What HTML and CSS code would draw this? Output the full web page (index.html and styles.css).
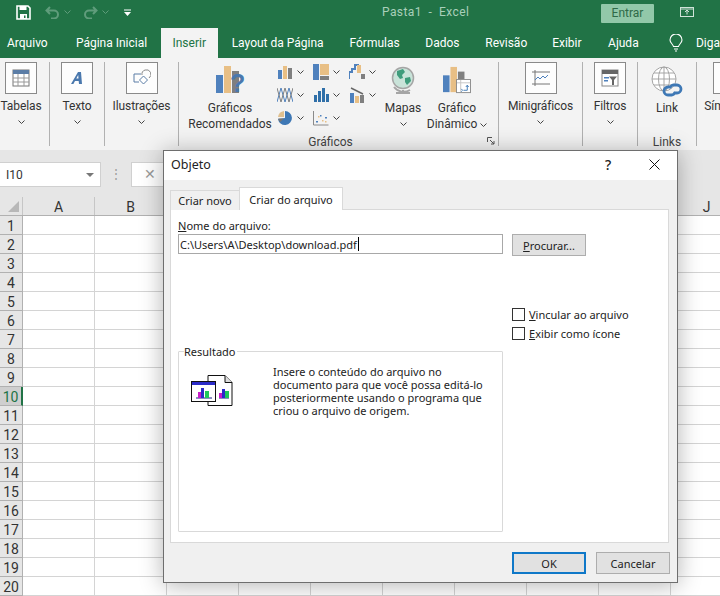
FILE: index.html
```html
<!DOCTYPE html>
<html lang="pt">
<head>
    <meta charset="utf-8">
    <title>Pasta1 - Excel</title>
    <link rel="stylesheet" href="styles.css">
</head>
<body>
    <header class="titlebar">
        <svg class="qa-save" viewBox="0 0 15 15"><path d="M1 1h11l2 2v11H1z" fill="none" stroke="#fff" stroke-width="1.6"/><rect x="3.5" y="1" width="7" height="4" fill="#fff"/><rect x="4" y="9" width="7" height="5" fill="#fff"/><rect x="8" y="10.5" width="1.5" height="2.5" fill="#217346"/></svg>
        <svg class="qa-arrow" viewBox="0 0 15 13"><path d="M5 1L1.5 4.5 5 8M2 4.5h7a4 4 0 0 1 0 8H6" fill="none" stroke="#5f9c7b" stroke-width="2"/></svg>
        <svg class="chev chev-dim" viewBox="0 0 7 4"><path d="M.5.5l3 3 3-3"/></svg>
        <svg class="qa-arrow qa-redo" viewBox="0 0 15 13"><path d="M10 1l3.5 3.5L10 8M13 4.5H6a4 4 0 0 0 0 8h3" fill="none" stroke="#5f9c7b" stroke-width="2"/></svg>
        <svg class="chev chev-dim" viewBox="0 0 7 4"><path d="M.5.5l3 3 3-3"/></svg>
        <svg class="qa-more" viewBox="0 0 7 7"><path d="M0 .5h7v1H0zM0 3h7L3.5 7z" fill="#fff"/></svg>
        <span class="doc-title">Pasta1&nbsp; -&nbsp; Excel</span>
        <span class="signin">Entrar</span>
        <svg class="ribbon-opt" viewBox="0 0 14 10"><rect x=".5" y=".5" width="13" height="9" fill="none" stroke="#cfe3d8"/><path d="M7 7.5V3M5 5l2-2 2 2M.5 2h13" fill="none" stroke="#cfe3d8"/></svg>
    </header>

    <nav class="tabs">
        <span class="tab tab-file">Arquivo</span>
        <span class="tab tab-home">Página Inicial</span>
        <span class="tab tab-active">Inserir</span>
        <span class="tab tab-layout">Layout da Página</span>
        <span class="tab tab-form">Fórmulas</span>
        <span class="tab tab-data">Dados</span>
        <span class="tab tab-rev">Revisão</span>
        <span class="tab tab-view">Exibir</span>
        <span class="tab tab-help">Ajuda</span>
        <svg class="bulb" viewBox="0 0 14 18"><path d="M4.5 12.5C4 10 1 9 1 6a6 6 0 0 1 12 0c0 3-3 4-3.500 6.500zM5 15h4M6 17h2" fill="none" stroke="#fff" stroke-width="1.100"/></svg>
        <span class="tab tab-tell">Diga</span>
    </nav>

    <section class="ribbon">
        <div class="group group-tables">
            <div class="big-btn">
                <div class="icon-box">
                    <svg class="box-svg" viewBox="0 0 18 18"><rect x="1" y="1" width="16" height="16" fill="#fff" stroke="#777"/><rect x="1" y="1" width="16" height="4" fill="#5b7da6"/><path d="M1 9h16M1 13h16M6 5v12M12 5v12" stroke="#999"/></svg>
                </div>
                <span class="btn-label">Tabelas</span>
                <svg class="chev" viewBox="0 0 7 4"><path d="M.5.5l3 3 3-3"/></svg>
            </div>
        </div>
        <div class="group group-text">
            <div class="big-btn">
                <div class="icon-box">
                    <svg class="box-svg" viewBox="0 0 18 18"><path d="M3 15L10 3h3l1 12h-3l-.3-3H7l-1.600 3zM8.300 9.500h2.200L10.200 6z" fill="#4a78ad" fill-rule="evenodd"/></svg>
                </div>
                <span class="btn-label">Texto</span>
                <svg class="chev" viewBox="0 0 7 4"><path d="M.5.5l3 3 3-3"/></svg>
            </div>
        </div>
        <div class="group group-illus">
            <div class="big-btn">
                <div class="icon-box">
                    <svg class="box-svg" viewBox="0 0 18 18"><path d="M8 5H1v8h5" fill="none" stroke="#5b7da6"/><path d="M9 6a4.500 4.500 0 1 1 7 3" fill="none" stroke="#888"/><path d="M10.500 7l4 4-4 4-4-4z" fill="#fff" stroke="#5b7da6"/></svg>
                </div>
                <span class="btn-label">Ilustrações</span>
                <svg class="chev" viewBox="0 0 7 4"><path d="M.5.5l3 3 3-3"/></svg>
            </div>
        </div>

        <div class="group group-charts">
            <div class="group-body">
                <div class="tall-btn tall-rec">
                    <svg class="tall-icon tall-help" viewBox="0 0 28 28"><rect x="0" y="9" width="7" height="18" fill="#4f81bd"/><rect x="8" y="0" width="7" height="27" fill="#e8bf85"/><rect x="16" y="5" width="7" height="22" fill="#7f7f7f"/><text x="14" y="26" class="help-mark">?</text></svg>
                    <span class="btn-label">Gráficos<br>Recomendados</span>
                </div>
                <div class="chart-grid">
                    <div class="mini">
                        <svg class="mini-icon" viewBox="0 0 16 16"><rect x="1" y="6" width="4" height="9" fill="#4f81bd"/><rect x="6" y="2" width="4" height="13" fill="#e8bf85"/><rect x="11" y="4" width="4" height="11" fill="#7f7f7f"/></svg>
                        <svg class="chev" viewBox="0 0 7 4"><path d="M.5.5l3 3 3-3"/></svg>
                    </div>
                    <div class="mini">
                        <svg class="mini-icon" viewBox="0 0 16 16"><rect x="0" y="0" width="6" height="16" fill="#4f81bd"/><rect x="7" y="0" width="9" height="11" fill="#e8bf85"/><rect x="7" y="12" width="9" height="4" fill="#7f7f7f"/></svg>
                        <svg class="chev" viewBox="0 0 7 4"><path d="M.5.5l3 3 3-3"/></svg>
                    </div>
                    <div class="mini">
                        <svg class="mini-icon" viewBox="0 0 16 16"><path d="M0 15V8h3V5h3V1h3v4" fill="none" stroke="#4f81bd" stroke-width="2"/><rect x="8" y="1" width="4" height="8" fill="#e8bf85"/><rect x="12" y="10" width="4" height="5" fill="#7f7f7f"/></svg>
                        <svg class="chev" viewBox="0 0 7 4"><path d="M.5.5l3 3 3-3"/></svg>
                    </div>
                    <div class="mini">
                        <svg class="mini-icon" viewBox="0 0 16 16"><path d="M0 15L4 1l4 14 4-14 4 14" fill="none" stroke="#4f81bd"/><path d="M0 1l4 14 4-14 4 14 4-14" fill="none" stroke="#7f7f7f"/></svg>
                        <svg class="chev" viewBox="0 0 7 4"><path d="M.5.5l3 3 3-3"/></svg>
                    </div>
                    <div class="mini">
                        <svg class="mini-icon" viewBox="0 0 16 16"><path d="M1 8h3v7H1zM5 4h3v11H5zM9 1h3v14H9zM13 7h3v8h-3z" fill="#2f6fa8"/></svg>
                        <svg class="chev" viewBox="0 0 7 4"><path d="M.5.5l3 3 3-3"/></svg>
                    </div>
                    <div class="mini">
                        <svg class="mini-icon" viewBox="0 0 16 16"><rect x="1" y="6" width="4" height="10" fill="#4f81bd"/><rect x="6" y="9" width="4" height="7" fill="#e8bf85"/><rect x="11" y="8" width="4" height="8" fill="#7f7f7f"/><path d="M2 1l12 6" stroke="#666" stroke-width="1.500"/></svg>
                        <svg class="chev" viewBox="0 0 7 4"><path d="M.5.5l3 3 3-3"/></svg>
                    </div>
                    <div class="mini">
                        <svg class="mini-icon" viewBox="0 0 16 16"><path d="M8 8V1a7 7 0 1 1-7 8z" fill="#3e78b5"/><path d="M7 7V1a7 7 0 0 0-6 6z" fill="#e0c08f"/><path d="M7 8.500H1.200a6 6 0 0 0 2 3.500z" fill="#777"/></svg>
                        <svg class="chev" viewBox="0 0 7 4"><path d="M.5.5l3 3 3-3"/></svg>
                    </div>
                    <div class="mini">
                        <svg class="mini-icon" viewBox="0 0 16 16"><path d="M.5 1v14h15" fill="none" stroke="#8a8a8a"/><path d="M3 11h2v1.500H3zM7 5h1.500v1.500H7zM12 7h2v1.500h-2z" fill="#4f81bd"/><path d="M5 6h1.500v1.500H5zM9 10h1.500v1.500H9zM12 11h1.500v1.500H12z" fill="#e8bf85"/></svg>
                        <svg class="chev" viewBox="0 0 7 4"><path d="M.5.5l3 3 3-3"/></svg>
                    </div>
                </div>
                <div class="tall-btn tall-maps">
                    <svg class="tall-icon" viewBox="0 0 26 28"><circle cx="13" cy="12" r="10.500" fill="#c9e3d9" stroke="#a5a5a5" stroke-width="1.500"/><path d="M7 5l6-2 2 3-3 3 1 3-3 1-3-4zM15 12l5-1 1 4-4 4-2-3z" fill="#3f9c7c"/><path d="M4 21a12 12 0 0 0 16 3M13 24v2" fill="none" stroke="#a5a5a5" stroke-width="2"/><rect x="6" y="26" width="14" height="2" fill="#a5a5a5"/></svg>
                    <span class="btn-label">Mapas</span>
                    <svg class="chev chev-tall" viewBox="0 0 7 4"><path d="M.5.5l3 3 3-3"/></svg>
                </div>
                <div class="tall-btn tall-pivot">
                    <svg class="tall-icon" viewBox="0 0 30 28"><rect x="0" y="9" width="7" height="18" fill="#4f81bd"/><rect x="8" y="0" width="7" height="27" fill="#e8bf85"/><rect x="16" y="5" width="7" height="8" fill="#7f7f7f"/><rect x="14.500" y="13.500" width="15" height="14" fill="#fff" stroke="#8a8a8a"/><path d="M15 17h14M19 14v13" stroke="#c4c4c4"/><path d="M22 25h4v-5M24.500 21.500l1.500-2 1.500 2M21 25l-1.500-1.500M21 25l-1.500 1.500" fill="none" stroke="#3e78b5"/></svg>
                    <span class="btn-label">Gráfico<br>Dinâmico <svg class="chev chev-inline" viewBox="0 0 7 4"><path d="M.5.5l3 3 3-3"/></svg></span>
                </div>
            </div>
            <div class="group-name">Gráficos</div>
            <svg class="launcher" viewBox="0 0 8 8"><path d="M.5 5V.5H5M3 3l4 4M7 4v3H4" fill="none" stroke="#555"/></svg>
        </div>

        <div class="group group-spark">
            <div class="big-btn">
                <div class="icon-box">
                    <svg class="box-svg" viewBox="0 0 18 18"><path d="M0 3h18M0 15h18M3 1v16" stroke="#777" fill="none"/><path d="M3 11l3-3 2 2 3-3 2 2 3-3" fill="none" stroke="#4f81bd"/></svg>
                </div>
                <span class="btn-label">Minigráficos</span>
                <svg class="chev" viewBox="0 0 7 4"><path d="M.5.5l3 3 3-3"/></svg>
            </div>
        </div>
        <div class="group group-filter">
            <div class="big-btn">
                <div class="icon-box">
                    <svg class="box-svg" viewBox="0 0 18 18"><rect x="1" y="1" width="16" height="16" fill="#fff" stroke="#888"/><rect x="1" y="1" width="16" height="4" fill="#666"/><path d="M3 8h5v1.500H3zM3 11h4v1.500H3z" fill="#4f81bd"/><path d="M8 7.500h8l-3 3.500v5h-2v-5z" fill="#666"/></svg>
                </div>
                <span class="btn-label">Filtros</span>
                <svg class="chev" viewBox="0 0 7 4"><path d="M.5.5l3 3 3-3"/></svg>
            </div>
        </div>
        <div class="group group-links">
            <div class="group-body">
                <div class="tall-btn tall-link">
                    <svg class="tall-icon link-icon" viewBox="0 0 32 31"><circle cx="13" cy="13" r="12" fill="#fff" stroke="#a5a5a5"/><ellipse cx="13" cy="13" rx="5.500" ry="12" fill="none" stroke="#a5a5a5"/><path d="M13 1v24M1 13h24M3 7h20M3 19h20" stroke="#a5a5a5"/><path d="M20 21h-3a4 4 0 0 0 0 8h4a4 4 0 0 0 3-3M23 27h3a4 4 0 0 0 0-8h-4a4 4 0 0 0-3 3" fill="none" stroke="#3e78b5" stroke-width="2.800"/></svg>
                    <span class="btn-label">Link</span>
                </div>
            </div>
            <div class="group-name">Links</div>
        </div>
        <div class="group group-symbols">
            <div class="big-btn">
                <div class="icon-box"></div>
                <span class="btn-label">Símbolos</span>
            </div>
        </div>
    </section>

    <section class="formula-bar">
        <div class="name-box">I10<span class="name-arrow"></span></div>
        <span class="bar-dots">⋮</span>
        <div class="formula-cancel">✕</div>
    </section>

    <section class="sheet">
        <div class="col-heads">
            <div class="corner"><span class="corner-mark"></span></div>
            <span class="col-head">A</span><span class="col-head">B</span><span class="col-head"></span><span class="col-head"></span><span class="col-head"></span><span class="col-head"></span><span class="col-head"></span><span class="col-head"></span><span class="col-head"></span><span class="col-head">J</span>
        </div>
        <div class="sheet-body">
            <div class="row-heads">
                <span class="row-head">1</span><span class="row-head">2</span><span class="row-head">3</span><span class="row-head">4</span><span class="row-head">5</span>
                <span class="row-head">6</span><span class="row-head">7</span><span class="row-head">8</span><span class="row-head">9</span><span class="row-head row-sel">10</span>
                <span class="row-head">11</span><span class="row-head">12</span><span class="row-head">13</span><span class="row-head">14</span><span class="row-head">15</span>
                <span class="row-head">16</span><span class="row-head">17</span><span class="row-head">18</span><span class="row-head">19</span><span class="row-head">20</span>
            </div>
            <div class="cells"></div>
        </div>
    </section>

    <div class="dialog">
        <div class="dlg-title">
            <span class="dlg-name">Objeto</span>
            <span class="dlg-help">?</span>
            <svg class="dlg-close" viewBox="0 0 11 11"><path d="M.5.5l10 10M10.500.5l-10 10" stroke="#111" fill="none"/></svg>
        </div>
        <div class="dlg-body">
            <div class="dlg-tabs">
                <span class="dlg-tab">Criar novo</span>
                <span class="dlg-tab dlg-tab-on">Criar do arquivo</span>
            </div>
            <div class="dlg-panel">
                <div class="panel-left">
                    <label class="file-label"><u>N</u>ome do arquivo:</label>
                    <div class="file-input">C:\Users\A\Desktop\download.pdf<span class="caret"></span></div>
                    <fieldset class="result">
                        <legend>Resultado</legend>
                        <svg class="result-icon" viewBox="0 0 42 32">
                            <path d="M17 .5h17l7 7v23H17z" fill="#fff" stroke="#111"/><path d="M34 .5v7h7" fill="#ddd" stroke="#111"/>
                            <rect x=".5" y="6.500" width="24" height="20" fill="#fff" stroke="#111"/><rect x="1" y="7" width="23" height="3" fill="#2b2bc8"/>
                            <path d="M5 23h16M28 23h10" stroke="#1a1a8a"/>
                            <path d="M7 17h3v6H7zM28 18h3v5h-3z" fill="#c81ec8"/><path d="M10 13h3v10h-3zM31 14h3v9h-3z" fill="#2b2bc8"/><path d="M14 16h4v7h-4zM34 16h4v7h-4z" fill="#1ec85a"/>
                        </svg>
                        <p class="result-text">Insere o conteúdo do arquivo no documento para que você possa editá-lo posteriormente usando o programa que criou o arquivo de origem.</p>
                    </fieldset>
                </div>
                <div class="panel-right">
                    <button class="dlg-btn" type="button"><u>P</u>rocurar...</button>
                    <div class="check-list">
                        <label class="check"><span class="check-box"></span><span><u>V</u>incular ao arquivo</span></label>
                        <label class="check"><span class="check-box"></span><span><u>E</u>xibir como ícone</span></label>
                    </div>
                </div>
            </div>
            <div class="dlg-foot">
                <button class="dlg-btn btn-default" type="button">OK</button>
                <button class="dlg-btn" type="button">Cancelar</button>
            </div>
        </div>
    </div>
</body>
</html>
```

FILE: styles.css
```css
* {
    margin: 0;
    padding: 0;
    box-sizing: border-box;
    font-family: Roboto, Arial, sans-serif;
}
body {
    width: 720px;
    height: 596px;
    overflow: hidden;
    background: #fff;
    color: #333;
    font-size: 12px;
}
svg {
    display: block;
    flex: none;
}

/* title bar */
.titlebar {
    display: flex;
    align-items: center;
    height: 28px;
    background: #217346;
    padding-left: 16px;
    padding-bottom: 4px;
}
.qa-save {
    width: 15px;
    height: 15px;
}
.qa-arrow {
    width: 15px;
    height: 13px;
    margin-left: 14px;
}
.qa-redo {
    margin-left: 12px;
}
.chev {
    width: 7px;
    height: 4px;
    fill: none;
    stroke: #444;
    stroke-width: 1;
}
.chev-dim {
    stroke: #5f9c7b;
    margin-left: 4px;
}
.qa-more {
    width: 7px;
    height: 7px;
    margin-left: 15px;
}
.doc-title {
    margin-left: 251px;
    width: 219px;
    color: #a9cfba;
    font-size: 12px;
    letter-spacing: .4px;
}
.signin {
    width: 53px;
    height: 19px;
    margin-top: 2px;
    background: #92c8a9;
    color: #2f6a48;
    text-align: center;
    line-height: 19px;
    border-radius: 1px;
}
.ribbon-opt {
    width: 14px;
    height: 10px;
    margin-left: 26px;
}

/* tabs */
.tabs {
    display: flex;
    align-items: center;
    height: 30px;
    background: #217346;
}
.tab {
    color: #fff;
    line-height: 30px;
    white-space: nowrap;
}
.tab-file { margin-left: 7px; width: 69px; }
.tab-home { width: 85px; }
.tab-active {
    width: 57px;
    background: #f3f3f3;
    color: #217346;
    text-align: center;
    margin-right: 14px;
}
.tab-layout { width: 118px; }
.tab-form { width: 76px; }
.tab-data { width: 60px; }
.tab-rev { width: 67px; }
.tab-view { width: 56px; }
.tab-help { width: 61px; }
.bulb {
    width: 14px;
    height: 18px;
    margin-right: 13px;
}

/* ribbon */
.ribbon {
    display: flex;
    height: 92px;
    background: #f3f3f3;
    padding-top: 4px;
}
.group {
    position: relative;
    display: flex;
    flex-direction: column;
    height: 84px;
    border-right: 1px solid #b1b1b1;
    flex: none;
}
.group-tables { width: 50px; }
.group-text { width: 55px; }
.group-illus { width: 74px; }
.group-charts { width: 320px; }
.group-spark { width: 84px; }
.group-filter { width: 55px; }
.group-links { width: 59px; }
.group-symbols { width: 64px; border-right: 0; }
.big-btn {
    display: flex;
    flex-direction: column;
    align-items: center;
}
.group-tables .big-btn { padding-right: 7px; }
.icon-box {
    display: flex;
    align-items: center;
    justify-content: center;
    width: 32px;
    height: 32px;
    background: #fdfdfd;
    border: 1px solid #8a8a8a;
    flex: none;
}
.box-svg {
    width: 18px;
    height: 18px;
}
.btn-label {
    display: block;
    color: #333;
    text-align: center;
    line-height: 16px;
    white-space: nowrap;
}
.big-btn .btn-label {
    margin-top: 4px;
    margin-bottom: 6px;
    letter-spacing: -.1px;
}
.group-body {
    display: flex;
    flex: 1;
    min-height: 0;
}
.group-name {
    height: 12px;
    line-height: 16px;
    text-align: center;
    color: #444;
}
.group-charts .group-name {
    padding-right: 16px;
}
.tall-btn {
    display: flex;
    flex-direction: column;
    align-items: center;
    flex: none;
}
.tall-icon {
    width: 28px;
    height: 28px;
    margin-top: 4px;
    margin-bottom: 6px;
}
.tall-help {
    overflow: visible;
}
.tall-rec {
    width: 84px;
    margin-left: 9px;
}
.help-mark {
    font-size: 25px;
    font-weight: 700;
    fill: #4a78ad;
    font-family: "Liberation Sans", sans-serif;
}
.chart-grid {
    display: grid;
    grid-template-columns: 35.5px 36px 34px;
    grid-auto-rows: 23px;
    width: 106px;
    margin-left: 5px;
    margin-top: 2px;
}
.mini {
    display: flex;
    align-items: flex-start;
    gap: 4px;
}
.mini-icon {
    width: 16px;
    height: 16px;
}
.mini .chev {
    margin-top: 6px;
}
.tall-maps {
    width: 36px;
    margin-left: 2px;
}
.chev-tall {
    margin-top: 6px;
}
.tall-pivot {
    width: 66px;
    margin-left: 3px;
}
.chev-inline {
    display: inline-block;
    vertical-align: middle;
}
.launcher {
    position: absolute;
    right: 3px;
    bottom: 1px;
    width: 8px;
    height: 8px;
}
.tall-link {
    width: 58px;
}
.link-icon {
    width: 32px;
    height: 31px;
    margin-top: 4px;
    margin-bottom: 3px;
}

/* formula bar */
.formula-bar {
    display: flex;
    align-items: center;
    height: 47px;
    background: #e6e6e6;
    padding-top: 1px;
}
.name-box {
    position: relative;
    width: 101px;
    height: 25px;
    background: #fff;
    border: 1px solid #d0d0d0;
    border-left: 0;
    padding-left: 6px;
    line-height: 24px;
    font-size: 12px;
}
.name-arrow {
    position: absolute;
    top: 10px;
    right: 6px;
    border-top: 4px solid #777;
    border-left: 4px solid transparent;
    border-right: 4px solid transparent;
}
.bar-dots {
    width: 30px;
    text-align: center;
    color: #999;
}
.formula-cancel {
    width: 60px;
    height: 25px;
    background: #fff;
    border: 1px solid #d0d0d0;
    padding-left: 12px;
    line-height: 23px;
    color: #999;
    font-size: 14px;
}

/* sheet */
.col-heads {
    display: flex;
    height: 19px;
    background: #e6e6e6;
    border-bottom: 1px solid #b1b1b1;
}
.corner {
    position: relative;
    width: 23px;
    flex: none;
    border-right: 1px solid #c6c6c6;
}
.corner-mark {
    position: absolute;
    right: 3px;
    bottom: 3px;
    border-bottom: 11px solid #b8b8b8;
    border-left: 11px solid transparent;
}
.col-head {
    width: 72px;
    flex: none;
    text-align: center;
    font-size: 14px;
    line-height: 20px;
    border-right: 1px solid #c6c6c6;
}
.sheet-body {
    display: flex;
}
.row-heads {
    display: flex;
    flex-direction: column;
    width: 23px;
    flex: none;
}
.row-head {
    height: 19px;
    background: #e6e6e6;
    border-bottom: 1px solid #b1b1b1;
    border-right: 1px solid #b1b1b1;
    text-align: center;
    font-size: 14px;
    line-height: 20px;
    flex: none;
}
.row-sel {
    background: #cfcfcf;
    color: #217346;
    border-right: 2px solid #217346;
}
.cells {
    flex: 1;
    height: 380px;
    background-image:
        linear-gradient(#d4d4d4 1px, transparent 1px),
        linear-gradient(90deg, #d4d4d4 1px, transparent 1px);
    background-size: 72px 19px;
    background-position: 71px 18px;
}

/* dialog */
.dialog {
    position: absolute;
    left: 163px;
    top: 150px;
    width: 515px;
    height: 433px;
    display: flex;
    flex-direction: column;
    background: #f0f0f0;
    border: 1px solid #6e6e6e;
    box-shadow: 0 2px 22px rgba(0, 0, 0, .3);
    color: #222;
    font-size: 11px;
}
.dialog * {
    font-family: "Noto Sans", Arial, sans-serif;
}
.dlg-title {
    display: flex;
    align-items: center;
    height: 29px;
    flex: none;
    background: #fff;
    padding-left: 7px;
    padding-bottom: 2px;
}
.dlg-name {
    font-size: 12.5px;
    flex: 1;
}
.dlg-help {
    font-size: 14px;
    width: 44px;
    font-weight: 500;
}
.dlg-close {
    width: 11px;
    height: 11px;
    margin-right: 17px;
}
.dlg-body {
    display: flex;
    flex-direction: column;
    flex: 1;
    padding: 0 8px 0 6px;
}
.dlg-tabs {
    display: flex;
    align-items: flex-end;
    height: 29px;
    flex: none;
}
.dlg-tab {
    height: 20px;
    width: 69px;
    background: #f0f0f0;
    border: 1px solid #d9d9d9;
    border-bottom: 0;
    border-right: 0;
    text-align: center;
    line-height: 20px;
    position: relative;
    top: 1px;
}
.dlg-tab-on {
    height: 23px;
    width: 104px;
    background: #fff;
    border-right: 1px solid #d9d9d9;
    line-height: 23px;
    z-index: 1;
}
.dlg-panel {
    display: flex;
    height: 334px;
    flex: none;
    background: #fff;
    border: 1px solid #d9d9d9;
    padding: 7px 0 10px 7px;
}
.panel-left {
    display: flex;
    flex-direction: column;
    width: 334px;
    flex: none;
}
.file-label {
    display: block;
    line-height: 17px;
}
.file-input {
    display: flex;
    align-items: center;
    width: 325px;
    height: 20px;
    border: 1px solid #a8a8a8;
    padding-left: 1px;
}
.caret {
    width: 1px;
    height: 14px;
    background: #000;
    margin-left: 1px;
}
.result {
    position: relative;
    width: 325px;
    margin-top: auto;
    height: 187px;
    border: 1px solid #d9d9d9;
    border-radius: 1px;
    padding-top: 5px;
}
.result legend {
    margin-left: 5px;
    padding-right: 1px;
    line-height: 13px;
}
.result-icon {
    position: absolute;
    left: 12px;
    top: 17px;
    width: 42px;
    height: 32px;
}
.result-text {
    width: 224px;
    margin-left: 94px;
    line-height: 13px;
    margin-top: 2px;
}
.panel-right {
    display: flex;
    flex-direction: column;
}
.dlg-btn {
    width: 74px;
    height: 22px;
    background: #e1e1e1;
    border: 1px solid #adadad;
    color: #222;
    font-size: 11px;
}
.panel-right .dlg-btn {
    margin-top: 17px;
}
.check-list {
    display: flex;
    flex-direction: column;
    gap: 6px;
    margin-top: 52px;
}
.check {
    display: flex;
    align-items: center;
    gap: 4px;
    height: 13px;
}
.check-box {
    width: 13px;
    height: 13px;
    background: #fff;
    border: 1px solid #333;
}
.dlg-foot {
    display: flex;
    justify-content: flex-end;
    gap: 10px;
    margin-top: 9px;
    margin-right: -1px;
}
.btn-default {
    border: 2px solid #0f78c8;
}
```
